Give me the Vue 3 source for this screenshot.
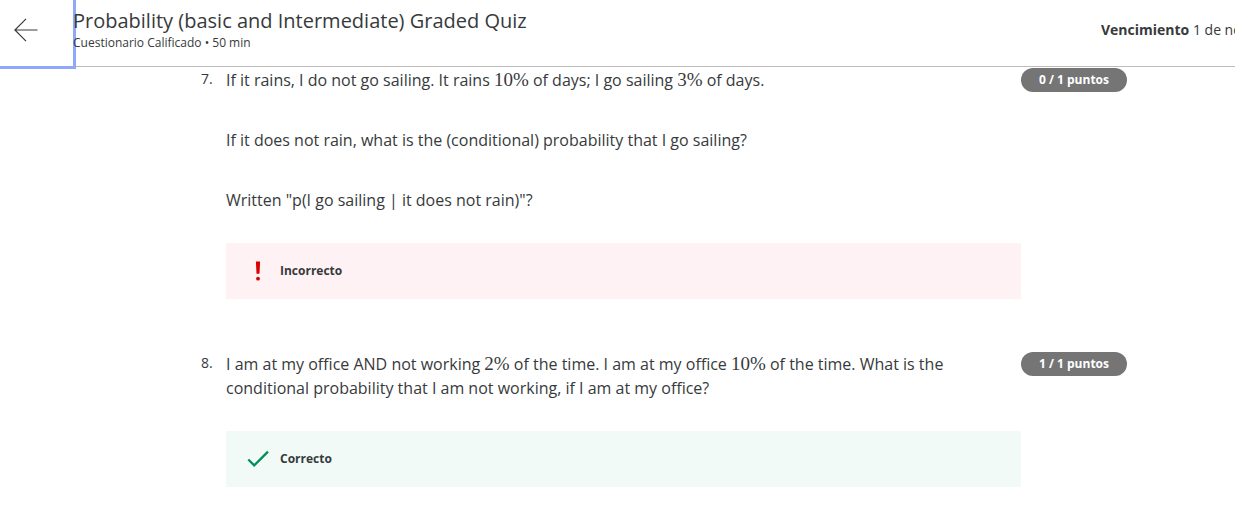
<script setup>
const questions = [
  {
    number: '7.',
    paragraphs: [
      [
        { text: 'If it rains, I do not go sailing. It rains ' },
        { text: '10%', math: true },
        { text: ' of days; I go sailing ' },
        { text: '3%', math: true },
        { text: ' of days.' },
      ],
      [{ text: 'If it does not rain, what is the (conditional) probability that I go sailing?' }],
      [{ text: 'Written "p(I go sailing | it does not rain)"?' }],
    ],
    points: '0 / 1 puntos',
    correct: false,
  },
  {
    number: '8.',
    paragraphs: [
      [
        { text: 'I am at my office AND not working ' },
        { text: '2%', math: true },
        { text: ' of the time. I am at my office ' },
        { text: '10%', math: true },
        { text: ' of the time. What is the conditional probability that I am not working, if I am at my office?' },
      ],
    ],
    points: '1 / 1 puntos',
    correct: true,
  },
]
</script>

<template>
  <div class="page">
    <header class="topbar">
      <button class="back" type="button" aria-label="Atrás">
        <svg width="24" height="24" viewBox="0 0 24 24" fill="none" stroke="currentColor" stroke-width="1.2">
          <path d="M23.5 12H1M12 0.8L0.9 12L12 23.2" />
        </svg>
      </button>
      <div class="heading">
        <h1>Probability (basic and Intermediate) Graded Quiz</h1>
        <p>Cuestionario Calificado • 50 min</p>
      </div>
      <div class="due"><strong>Vencimiento</strong> 1 de noviembre</div>
    </header>

    <main class="questions">
      <section v-for="q in questions" :key="q.number" class="question">
        <span class="number">{{ q.number }}</span>
        <div class="body">
          <div class="prompt">
            <p v-for="(parts, i) in q.paragraphs" :key="i"><span
              v-for="(part, j) in parts" :key="j" :class="{ math: part.math }">{{ part.text }}</span></p>
          </div>
          <div class="result" :class="q.correct ? 'right' : 'wrong'">
            <svg v-if="q.correct" width="24" height="24" viewBox="0 0 24 24" fill="none" stroke="#008f59" stroke-width="2.3">
              <path d="M2.3 12.5L8.2 18.3L22 4.6" />
            </svg>
            <svg v-else width="24" height="24" viewBox="0 0 24 24" fill="#d90000">
              <path d="M9.9 2.5h4.2l-.6 12.2h-3z" />
              <circle cx="12" cy="19.7" r="1.9" />
            </svg>
            <strong>{{ q.correct ? 'Correcto' : 'Incorrecto' }}</strong>
          </div>
        </div>
        <span class="points">{{ q.points }}</span>
      </section>
    </main>
  </div>
</template>

<style>
body {
  margin: 0;
  background: #fff;
}
</style>

<style scoped>
.page {
  overflow: hidden;
  color: #373a3c;
  font-family: "Open Sans", "Noto Sans", sans-serif;
  font-size: 16px;
  line-height: 24px;
}
h1,
p {
  margin: 0;
  font-weight: 400;
}
.topbar {
  display: flex;
  height: 66px;
  border-bottom: 1px solid #bdbdbd;
}
.back {
  flex: none;
  display: flex;
  align-items: center;
  width: 73px;
  padding: 0 0 6px 14px;
  border: 0;
  background: #fff;
  color: #373a3c;
  box-shadow: 0 0 0 3px #8fa8fa;
  box-sizing: border-box;
}
.heading {
  position: relative;
  flex: 1;
  min-width: 0;
  padding-top: 8px;
  white-space: nowrap;
}
h1 {
  font-size: 20px;
  line-height: 26px;
}
.heading p {
  font-size: 12px;
  line-height: 18px;
}
.due {
  flex: none;
  width: 134px;
  padding-top: 18px;
  overflow: hidden;
  font-size: 14px;
  white-space: nowrap;
}
.questions {
  display: grid;
  gap: 53px;
  padding: 1px 108px 45px 201px;
}
.question {
  display: grid;
  grid-template-columns: 25px minmax(0, 1fr) 106px;
  align-items: start;
}
.number {
  font-size: 14px;
  line-height: 22px;
}
.prompt {
  display: grid;
  gap: 36px;
  padding: 0 60px 31px 0;
}
.math {
  font-family: "Liberation Serif", serif;
  font-size: 19px;
  line-height: 20px;
}
.result {
  display: flex;
  align-items: center;
  gap: 10px;
  height: 56px;
  padding-left: 20px;
  font-size: 12px;
}
.wrong {
  background: #fff2f4;
}
.right {
  background: #f1faf7;
}
.points {
  border-radius: 12px;
  background: #757575;
  color: #fff;
  font-size: 12px;
  font-weight: 700;
  text-align: center;
}
</style>
